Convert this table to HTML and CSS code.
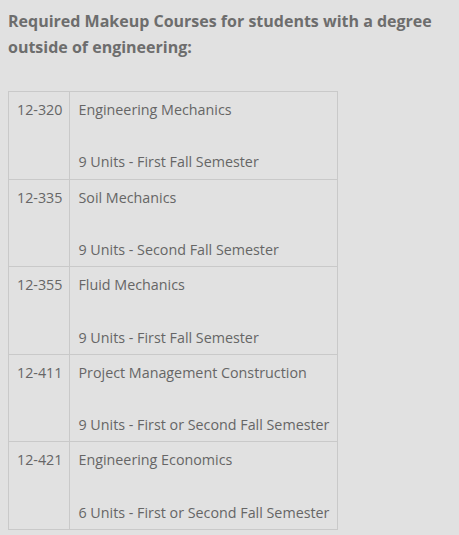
FILE: index.html
```html
<!DOCTYPE html>
<html>
<head>
<meta charset="utf-8">
<link rel="stylesheet" href="styles.css">
</head>
<body>
<h3 class="title">Required Makeup Courses for students with a degree outside of engineering:</h3>
<table class="courses">
<tr><td class="code">12-320</td><td class="info">Engineering Mechanics<br><br>9 Units - First Fall Semester</td></tr>
<tr><td class="code">12-335</td><td class="info">Soil Mechanics<br><br>9 Units - Second Fall Semester</td></tr>
<tr><td class="code">12-355</td><td class="info">Fluid Mechanics<br><br>9 Units - First Fall Semester</td></tr>
<tr><td class="code">12-411</td><td class="info">Project Management Construction<br><br>9 Units - First or Second Fall Semester</td></tr>
<tr><td class="code">12-421</td><td class="info">Engineering Economics<br><br>6 Units - First or Second Fall Semester</td></tr>
</table>
</body>
</html>
```
FILE: styles.css
```css
html, body {
  background: #e1e1e1;
}
body {
  margin: 8px;
  font-family: "Open Sans", sans-serif;
  color: #666666;
}
.title {
  margin: 0 0 31px 0;
  font-size: 16px;
  line-height: 26px;
  font-weight: 700;
  color: #6d6d6d;
}
.courses {
  border-collapse: collapse;
  font-size: 14.3px;
  line-height: 26.2px;
}
.courses td {
  border: 1px solid #c9c9c9;
  padding: 5px 8px 3px 8px;
  vertical-align: top;
}
.courses .code {
  padding-right: 7px;
}
```
